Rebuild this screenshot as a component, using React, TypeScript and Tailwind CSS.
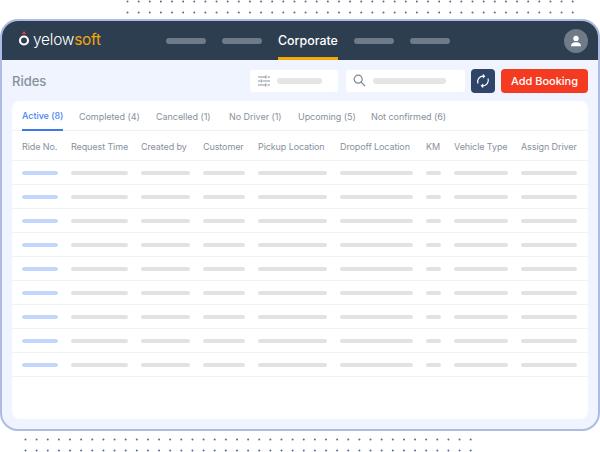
import React from "react";

const cols = [
  { label: "Ride No.", cell: "w-[49px]", bar: "w-[36px] bg-[#c3d6fb]" },
  { label: "Request Time", cell: "w-[70px]", bar: "w-[57px] bg-[#e2e2e2]" },
  { label: "Created by", cell: "w-[62px]", bar: "w-[49px] bg-[#e2e2e2]" },
  { label: "Customer", cell: "w-[55px]", bar: "w-[42px] bg-[#e2e2e2]" },
  { label: "Pickup Location", cell: "w-[82px]", bar: "w-[69px] bg-[#e2e2e2]" },
  { label: "Dropoff Location", cell: "w-[86px]", bar: "w-[73px] bg-[#e2e2e2]" },
  { label: "KM", cell: "w-[28px]", bar: "w-[15px] bg-[#e2e2e2]" },
  { label: "Vehicle Type", cell: "w-[67px]", bar: "w-[54px] bg-[#e2e2e2]" },
  { label: "Assign Driver", cell: "w-[56px]", bar: "w-[56px] bg-[#e2e2e2]" },
];

const tabs = [
  { label: "Completed (4)", cls: "w-[77px]" },
  { label: "Cancelled (1)", cls: "w-[73px]" },
  { label: "No Driver (1)", cls: "w-[69px]" },
  { label: "Upcoming (5)", cls: "w-[73px]" },
  { label: "Not confirmed (6)", cls: "w-[80px]" },
];

function Dots({ x, count, h, ys }: { x: number; count: number; h: number; ys: number[] }) {
  const items: React.ReactNode[] = [];
  ys.forEach((y) => {
    for (let i = 0; i < count; i++) {
      items.push(<circle key={`${y}-${i}`} cx={x + i * 11.13} cy={y} r={1} fill="#5d6a8c" />);
    }
  });
  return (
    <svg width={600} height={h} className="block shrink-0">
      {items}
    </svg>
  );
}

function Pill() {
  return <div className="h-[6px] w-[40px] rounded-full bg-[#6f7b88]" />;
}

export default function App() {
  return (
    <div className="flex h-[452px] w-[600px] flex-col overflow-hidden bg-white font-['Inter','Liberation_Sans',sans-serif]">
      <Dots x={127.5} count={41} h={19} ys={[1.5, 12.5]} />
      <div className="flex h-[412px] w-[600px] shrink-0 flex-col overflow-hidden rounded-[18px] border-2 border-[#aebbe5] bg-[#eff4fe]">
        <header className="flex h-[39px] shrink-0 items-center bg-[#2d3e50] pl-[16px] pr-[10px]">
          <svg width="12" height="16" viewBox="0 0 12 16" className="mt-[-3px] shrink-0">
            <path d="M6 0 L8.2 3 L3.8 3 Z" fill="#e8402c" />
            <circle cx="6" cy="9.5" r="4" fill="none" stroke="#ffffff" strokeWidth="2.2" />
          </svg>
          <div className="ml-[3px] mt-[-1px] w-[133px] text-[15.4px] font-light leading-none tracking-[-0.2px] text-white">
            yelow<span className="font-normal text-[#f6a609]">soft</span>
          </div>
          <div className="flex items-center gap-[16px]">
            <Pill />
            <Pill />
            <div className="flex h-[39px] w-[60px] items-center whitespace-nowrap border-b-[3px] border-[#f6a609] pt-[5px] text-[12.4px] font-medium text-white">
              Corporate
            </div>
            <Pill />
            <Pill />
          </div>
          <div className="ml-auto flex h-[24px] w-[24px] items-center justify-center rounded-full bg-[#6f7b88]">
            <svg width="12" height="12" viewBox="0 0 12 12">
              <circle cx="6" cy="3.4" r="2.7" fill="#fff" />
              <path d="M1 11.2 C1 8.2 3 7.2 6 7.2 C9 7.2 11 8.2 11 11.2 Z" fill="#fff" />
            </svg>
          </div>
        </header>

        <div className="flex h-[41px] shrink-0 items-center pl-[10px] pr-[10px]">
          <div className="w-[238px] pt-[3px] text-[13px] font-medium text-[#87919c]">Rides</div>
          <div className="flex h-[22px] w-[88px] items-center gap-[6px] rounded-[3px] bg-white pl-[7px]">
            <svg width="14" height="12" viewBox="0 0 14 12" fill="none" stroke="#8a939c" strokeWidth="1.2">
              <path d="M1 2h7M10.5 2H13M1 6h2M5.5 6H13M1 10h7M10.5 10H13" />
              <path d="M8.8 .5v3M4.2 4.5v3M8.8 8.5v3" />
            </svg>
            <div className="h-[6px] w-[45px] rounded-full bg-[#e5e5e5]" />
          </div>
          <div className="ml-[8px] flex h-[22px] w-[119px] items-center gap-[7px] rounded-[3px] bg-white pl-[7px]">
            <svg width="13" height="13" viewBox="0 0 13 13" fill="none" stroke="#7f8a94" strokeWidth="1.2">
              <circle cx="5.2" cy="5.2" r="4" />
              <path d="M8.2 8.2L12 12" />
            </svg>
            <div className="h-[6px] w-[73px] rounded-full bg-[#e5e5e5]" />
          </div>
          <div className="ml-[6px] flex h-[24px] w-[24px] items-center justify-center rounded-[4px] bg-[#2f4468]">
            <svg width="14" height="16" viewBox="0 0 14 16" fill="none" stroke="#ffffff" strokeWidth="1.2">
              <path d="M2 10.5C0.6 6.5 3.5 3 7.5 3.2" />
              <path d="M6.8 0.8L9.4 3.2L6.8 5.4" fill="#fff" stroke="none" />
              <path d="M12 5.5C13.4 9.5 10.5 13 6.5 12.8" />
              <path d="M7.2 10.6L4.6 12.8L7.2 15.2" fill="#fff" stroke="none" />
            </svg>
          </div>
          <div className="ml-[6px] flex h-[24px] w-[87px] items-center justify-center rounded-[4px] bg-[#f43b22] pt-[2px] text-[11px] font-medium text-white">
            Add Booking
          </div>
        </div>

        <main className="mx-[10px] flex h-[318px] shrink-0 flex-col rounded-[8px] bg-white">
          <nav className="flex h-[30px] shrink-0 items-start border-b border-[#f1f1f1] pl-[10px] text-[9px] tracking-[-0.05px] text-[#87919c]">
            <div className="mr-[16px] flex h-[30px] w-[41px] items-center whitespace-nowrap border-b-2 border-[#3b78f0] pt-[1px] font-medium text-[#4a84f2]">
              Active (8)
            </div>
            {tabs.map((t) => (
              <div key={t.label} className={`flex h-[29px] items-center whitespace-nowrap pt-[2px] ${t.cls}`}>
                {t.label}
              </div>
            ))}
          </nav>
          <div className="flex h-[30px] shrink-0 items-center border-b border-[#f1f1f1] pl-[10px] pt-[2px] text-[9px] tracking-[-0.1px] text-[#87919c]">
            {cols.map((c) => (
              <div key={c.label} className={`shrink-0 whitespace-nowrap ${c.cell}`}>
                {c.label}
              </div>
            ))}
          </div>
          {Array.from({ length: 9 }).map((_, r) => (
            <div key={r} className="flex h-[24px] shrink-0 items-center border-b border-[#f1f1f1] pl-[10px]">
              {cols.map((c) => (
                <div key={c.label} className={`shrink-0 ${c.cell}`}>
                  <div className={`h-[4px] rounded-full ${c.bar}`} />
                </div>
              ))}
            </div>
          ))}
        </main>
      </div>
      <Dots x={25.5} count={41} h={21} ys={[8.5, 19.5]} />
    </div>
  );
}
